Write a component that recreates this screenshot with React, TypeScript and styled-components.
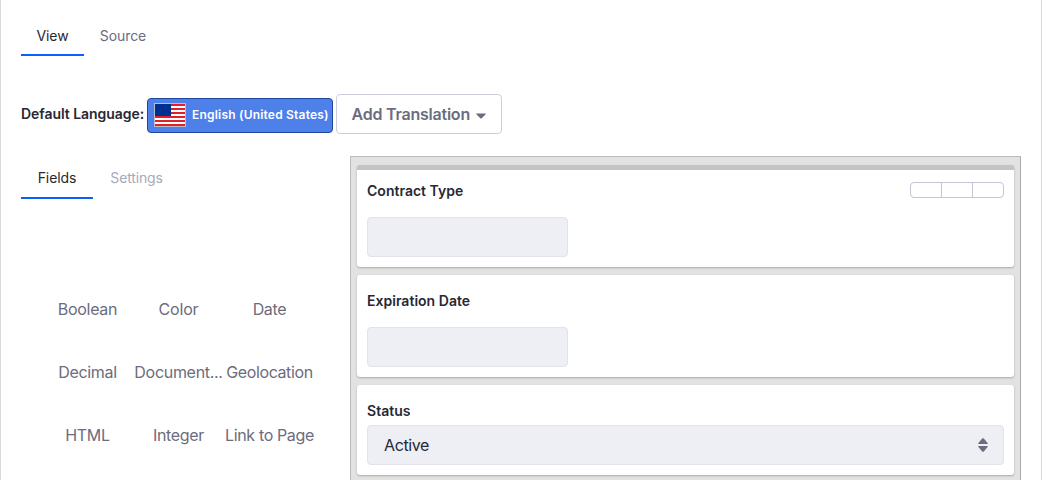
import React from 'react';
import styled, { createGlobalStyle } from 'styled-components';

const GlobalStyle = createGlobalStyle`
  * { box-sizing: border-box; }
  html, body { margin: 0; height: 100%; overflow: hidden; background: #fff; }
  body { font-family: Inter, "Liberation Sans", sans-serif; font-size: 16px; color: #272833; -webkit-font-smoothing: antialiased; }
`;

const Sheet = styled.main`
  height: 480px;
  overflow: hidden;
  padding: 16px 20px 0;
  border: solid #d9d9df;
  border-width: 0 1px;
`;

const TabBar = styled.nav`
  display: flex;
  height: 40px;
`;

const Tab = styled.a<{ $active?: boolean; $disabled?: boolean; $width: number; $tracking?: number; $line?: number }>`
  display: flex;
  justify-content: center;
  width: ${p => p.$width}px;
  height: 100%;
  font-size: 14px;
  line-height: ${p => p.$line ?? 40}px;
  white-space: nowrap;
  letter-spacing: ${p => p.$tracking ?? 0}px;
  color: ${p => (p.$active ? '#272833' : p.$disabled ? '#a7a9bc' : '#6b6c7e')};
  border-bottom: 2px solid ${p => (p.$active ? '#0b5fff' : 'transparent')};
`;

const LanguageBar = styled.div`
  display: flex;
  align-items: center;
  height: 40px;
  margin-top: 38px;
`;

const LanguageLabel = styled.span`
  width: 126px;
  padding-bottom: 2px;
  font-size: 14px;
  font-weight: 600;
  letter-spacing: -0.04px;
  white-space: nowrap;
`;

const LanguageButton = styled.button`
  display: flex;
  align-items: center;
  width: 186px;
  height: 35px;
  margin: 2px 3px 0 0;
  padding: 0 0 0 6px;
  border: 1px solid #2047a0;
  border-radius: 4px;
  background: #4e80ea;
  color: #fff;
  font: 600 12px Inter, "Liberation Sans", sans-serif;
  letter-spacing: 0.2px;
  white-space: nowrap;
`;

const LanguageName = styled.span`
  padding-bottom: 2px;
`;

const Flag = styled.svg`
  display: block;
  flex: none;
  width: 32px;
  height: 24px;
  margin-right: 6px;
`;

const TranslationButton = styled.button`
  display: flex;
  align-items: center;
  width: 166px;
  height: 40px;
  padding: 0 0 0 14.5px;
  border: 1px solid #cdced9;
  border-radius: 4px;
  background: #fff;
  color: #6b6c7e;
  font: 600 16px Inter, "Liberation Sans", sans-serif;
  letter-spacing: -0.22px;
  white-space: nowrap;
`;

const TranslationText = styled.span`
  width: 124.5px;
  text-align: left;
`;

const Caret = styled.svg`
  margin-top: 4px;
`;

const Builder = styled.div`
  display: flex;
  justify-content: space-between;
  margin-top: 22px;
`;

const Sidebar = styled.aside`
  width: 300px;
  padding-top: 3px;
`;

const FieldGrid = styled.div`
  display: grid;
  grid-template-columns: repeat(3, 91px);
  grid-auto-rows: 63px;
  margin: 79px 0 0 21px;
`;

const FieldType = styled.div<{ $tracking?: number }>`
  display: flex;
  justify-content: center;
  line-height: 63px;
  color: #6b6c7e;
  white-space: nowrap;
  letter-spacing: ${p => p.$tracking ?? 0}px;
`;

const Canvas = styled.section`
  display: flex;
  flex-direction: column;
  gap: 8px;
  width: 671px;
  height: 340px;
  padding: 8px 6px;
  border: 1px solid #bbbcbe;
  border-right-color: #aaabad;
  background: #e2e2e2;
`;

const Card = styled.article<{ $height: number; $selected?: boolean }>`
  flex: none;
  height: ${p => p.$height}px;
  padding: ${p => (p.$selected ? 12 : 17)}px 10px 0;
  border-top: ${p => (p.$selected ? '5px solid #c4c4c4' : '0')};
  border-radius: 3px;
  background: #fff;
  box-shadow: 0 1px 2px rgba(0, 0, 0, 0.25);
`;

const CardHeader = styled.header`
  display: flex;
  justify-content: space-between;
  height: 18px;
`;

const CardTitle = styled.span<{ $tracking?: number }>`
  font-size: 14px;
  font-weight: 600;
  line-height: 18px;
  white-space: nowrap;
  letter-spacing: ${p => p.$tracking ?? 0.02}px;
`;

const Actions = styled.div`
  display: flex;
  width: 94px;
  height: 16px;
  border: 1px solid #c6c4d6;
  border-radius: 4px;
`;

const Action = styled.button`
  flex: 1;
  padding: 0;
  border: 0;
  background: transparent;
  & + & { border-left: 1px solid #c6c4d6; }
`;

const Control = styled.div<{ $wide?: boolean }>`
  display: flex;
  align-items: center;
  justify-content: space-between;
  width: ${p => (p.$wide ? '100%' : '201px')};
  height: 40px;
  margin-top: ${p => (p.$wide ? 5 : 17)}px;
  padding: 0 15px 0 16px;
  border: 1px solid #e1e2ea;
  border-radius: 4px;
  background: #eeeff4;
  letter-spacing: -0.4px;
`;

const stripes = [1, 5, 9, 13, 17, 21];

const fieldTypes: [string, number][] = [
  ['Boolean', -0.3], ['Color', -0.2], ['Date', -0.3],
  ['Decimal', -0.3], ['Document...', -0.3], ['Geolocation', -0.4],
  ['HTML', -0.25], ['Integer', -0.35], ['Link to Page', -0.36],
];

const UsFlag = () => (
  <Flag viewBox="0 0 32 24" aria-hidden="true">
    <rect width="32" height="24" fill="#b9bdc8" />
    <rect x="1" y="1" width="30" height="22" fill="#fff" />
    {stripes.map(y => (
      <rect key={y} x="1" y={y} width="30" height="2" fill="#e02028" />
    ))}
    <rect x="1" y="1" width="16" height="12" fill="#002f92" />
  </Flag>
);

export default function App() {
  return (
    <>
      <GlobalStyle />
      <Sheet>
        <TabBar>
          <Tab $active $width={63} $tracking={-0.1}>View</Tab>
          <Tab $width={78} $tracking={-0.1}>Source</Tab>
        </TabBar>
        <LanguageBar>
          <LanguageLabel>Default Language:</LanguageLabel>
          <LanguageButton><UsFlag /><LanguageName>English (United States)</LanguageName></LanguageButton>
          <TranslationButton>
            <TranslationText>Add Translation</TranslationText>
            <Caret width="10" height="6" viewBox="0 0 10 6"><path d="M.8 0.500h8.400q1 .1.3.9L5.700 5.200q-.7.7-1.400 0L.5 1.400Q-.2.6.8.5z" fill="#6b6c7e" /></Caret>
          </TranslationButton>
        </LanguageBar>
        <Builder>
          <Sidebar>
            <TabBar>
              <Tab $active $width={72} $line={38} $tracking={-0.1}>Fields</Tab>
              <Tab $disabled $width={87} $line={38} $tracking={-0.15}>Settings</Tab>
            </TabBar>
            <FieldGrid>
              {fieldTypes.map(([name, tracking]) => (
                <FieldType key={name} $tracking={tracking}>{name}</FieldType>
              ))}
            </FieldGrid>
          </Sidebar>
          <Canvas>
            <Card $height={102} $selected>
              <CardHeader>
                <CardTitle>Contract Type</CardTitle>
                <Actions><Action /><Action /><Action /></Actions>
              </CardHeader>
              <Control />
            </Card>
            <Card $height={102}>
              <CardHeader><CardTitle>Expiration Date</CardTitle></CardHeader>
              <Control />
            </Card>
            <Card $height={90}>
              <CardHeader><CardTitle>Status</CardTitle></CardHeader>
              <Control $wide>
                <span>Active</span>
                <svg width="10" height="14" viewBox="0 0 10 14"><path d="M.6 6Q-.2 5.700.4 5L4.200.6q.8-.8 1.600 0L9.600 5q.6.7-.2 1zM.6 8h8.800q.8.3.2 1L5.800 13.400q-.8.8-1.600 0L.4 9Q-.2 8.300.6 8z" fill="#6b6c7e" /></svg>
              </Control>
            </Card>
          </Canvas>
        </Builder>
      </Sheet>
    </>
  );
}
